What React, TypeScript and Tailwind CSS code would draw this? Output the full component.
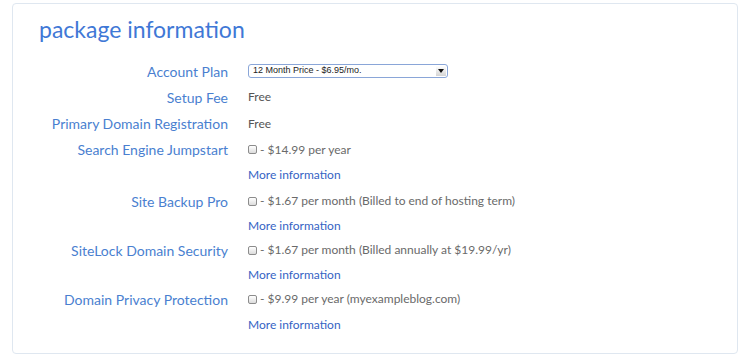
type Addon = {
  label: string;
  price: string;
  rowH: string;
  linkH: string;
};

const addons: Addon[] = [
  { label: 'Search Engine Jumpstart', price: '- $14.99 per year', rowH: 'h-[25px]', linkH: 'h-[26px]' },
  { label: 'Site Backup Pro', price: '- $1.67 per month (Billed to end of hosting term)', rowH: 'h-[26px]', linkH: 'h-[23px]' },
  { label: 'SiteLock Domain Security', price: '- $1.67 per month (Billed annually at $19.99/yr)', rowH: 'h-[26px]', linkH: 'h-[23px]' },
  { label: 'Domain Privacy Protection', price: '- $9.99 per year (myexampleblog.com)', rowH: 'h-[26px]', linkH: 'h-[26px]' },
];

function Label({ children }: { children: React.ReactNode }) {
  return (
    <div className="w-[215px] shrink-0 text-right text-[14px] text-[#4a7fd0]">{children}</div>
  );
}

function Checkbox() {
  return (
    <span className="inline-block w-[9px] h-[9px] border border-[#8c8c8c] rounded-[2px] bg-gradient-to-b from-white to-[#dcdcdc] mr-[3px]" />
  );
}

export default function App() {
  return (
    <div className="w-[750px] h-[356px] bg-white px-[12px] pt-[3px] font-['Lato','Open_Sans',sans-serif]">
      <div className="h-[351px] border border-[#dfe7f0] rounded-[4px] bg-white">
        <h1 className="pl-[26px] pt-[8px] text-[23px] leading-[34px] font-normal text-[#3f78d6]">
          package information
        </h1>

        <div className="mt-[12px]">
          {/* Account plan */}
          <div className="flex items-center h-[26px]">
            <Label>Account Plan</Label>
            <div className="ml-[20px] w-[200px] h-[14px] flex items-center border border-[#8aa6d8] rounded-[3px] bg-white font-['Liberation_Sans',sans-serif] text-[9px] text-[#222]">
              <span className="pl-[4px] flex-1">12 Month Price - $6.95/mo.</span>
              <span className="w-[10px] h-[10px] mr-[1px] flex items-center justify-center bg-gradient-to-b from-white to-[#d4d4d4]">
                <svg width="6" height="4" viewBox="0 0 6 4">
                  <polygon points="0,0 6,0 3,4" fill="#111" />
                </svg>
              </span>
            </div>
          </div>

          <div className="flex items-center h-[26px]">
            <Label>Setup Fee</Label>
            <div className="ml-[20px] text-[12px] text-[#555]">Free</div>
          </div>

          <div className="flex items-center h-[27px]">
            <Label>Primary Domain Registration</Label>
            <div className="ml-[20px] text-[12px] text-[#555]">Free</div>
          </div>

          {addons.map((a) => (
            <div key={a.label}>
              <div className={`flex items-center ${a.rowH}`}>
                <Label>{a.label}</Label>
                <div className="ml-[20px] flex items-center text-[12px] text-[#6a6a6a]">
                  <Checkbox />
                  <span>{a.price}</span>
                </div>
              </div>
              <div className={`flex items-center ${a.linkH}`}>
                <div className="w-[215px] shrink-0" />
                <a href="#" className="ml-[20px] text-[12px] text-[#3563c4]">
                  More information
                </a>
              </div>
            </div>
          ))}
        </div>
      </div>
    </div>
  );
}
